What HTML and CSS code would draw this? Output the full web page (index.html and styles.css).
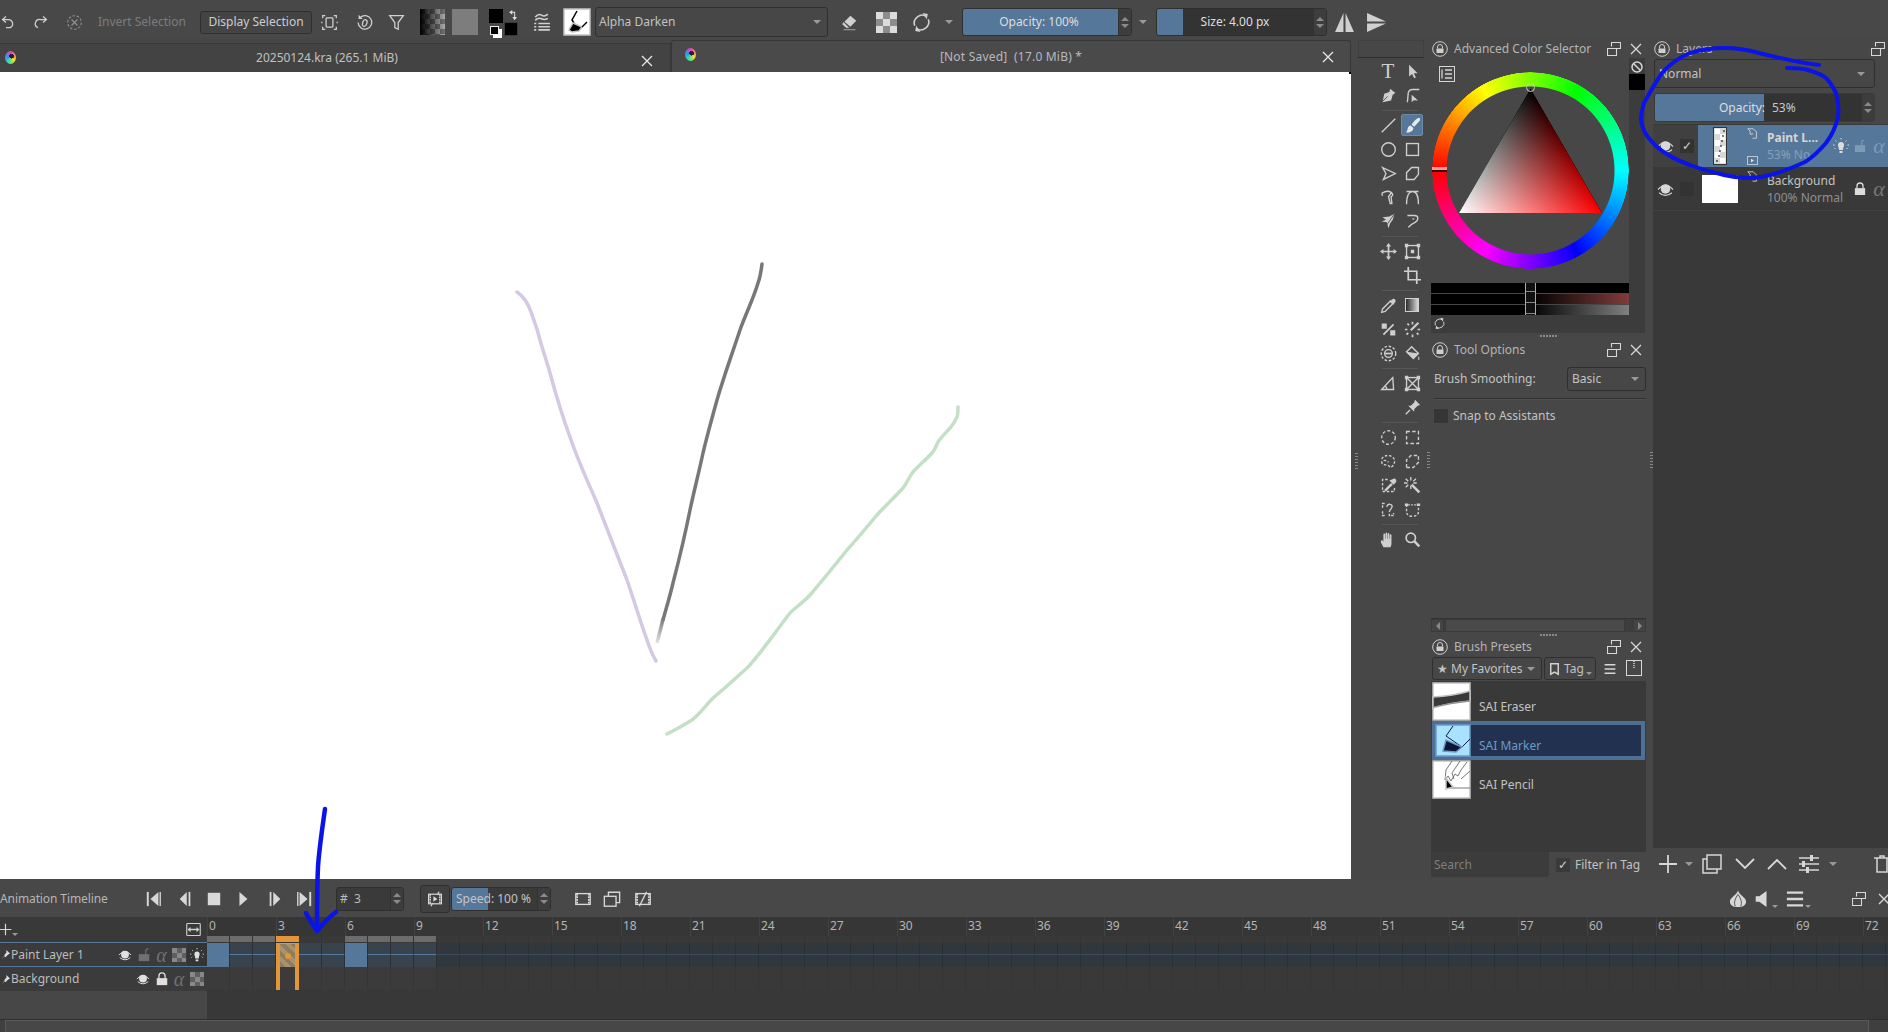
FILE: index.html
```html
<!DOCTYPE html>
<html lang="en">
<head>
<meta charset="utf-8">
<title>Krita</title>
<link rel="stylesheet" href="styles.css">
</head>
<body>
<svg class="defs" aria-hidden="true">
  <symbol id="undo" viewBox="0 0 20 20"><path d="M7 3 3 6.500 7 10M3.500 6.500H10a5 5 0 0 1 2 9.500H7"/></symbol>
  <symbol id="redo" viewBox="0 0 20 20"><path d="M13 3 17 6.500 13 10M16.500 6.500H10a5 5 0 0 0-3 9.500"/></symbol>
  <symbol id="desel" viewBox="0 0 20 20"><circle cx="10" cy="10" r="8" stroke-dasharray="3 2" stroke-width="1.300"/><path d="m6.500 6.500 7 7m0-7-7 7"/></symbol>
  <symbol id="fit" viewBox="0 0 20 20"><path d="M2 5V2h3M15 2h3v3M18 15v3h-3M5 18H2v-3M1 9v2M19 9v2"/><rect x="6" y="4.500" width="8" height="11" rx="1"/></symbol>
  <symbol id="hist" viewBox="0 0 20 20"><path d="M5 4a8 8 0 1 1-2.500 6"/><path d="M3 1v5h5z" fill="currentColor" stroke="none"/><ellipse cx="10.500" cy="10.500" rx="2.500" ry="4" transform="rotate(20 10 10)"/></symbol>
  <symbol id="funnel" viewBox="0 0 20 20"><path d="M2 2h16l-6 8v8l-4-2v-6z"/></symbol>
  <symbol id="mbr" viewBox="0 0 20 20"><path d="M4 5q3-4 6-2t6-1M4 8q3-3 6-1.500t6-.5M3 11h2M7 11h11M3 14h2M7 14h11M3 17h2M7 17h11"/></symbol>
  <symbol id="eraser" viewBox="0 0 20 20"><path d="m11 2 7 6-7 7-7-6z" fill="currentColor" stroke="none"/><path d="m3 10 6 6H6l-4-4zM3 18.500h14" fill="currentColor" stroke="currentColor" stroke-width=".8"/></symbol>
  <symbol id="reload" viewBox="0 0 20 20"><path d="M15 4.500A7.500 7.500 0 0 0 3.500 13M5 15.500A7.500 7.500 0 0 0 16.500 7"/><path d="m11 1 5 1-1 5zM9 19l-5-1 1-5z" fill="currentColor" stroke="none"/></symbol>
  <symbol id="mirh" viewBox="0 0 20 20"><path d="M9 1v18H1zM11 1v18h8z" fill="currentColor" stroke="none"/></symbol>
  <symbol id="mirv" viewBox="0 0 20 20"><path d="M1 1h0l18 8H1zM1 11h18L1 19z" fill="currentColor" stroke="none"/></symbol>
  <symbol id="lockc" viewBox="0 0 16 16"><circle cx="8" cy="8" r="7.300" stroke-width="1"/><rect x="4.500" y="7.500" width="7" height="4.500" fill="currentColor" stroke="none"/><path d="M5.500 7.500V6a2.500 2.500 0 0 1 5 0v1.500" stroke-width="1"/></symbol>
  <symbol id="float" viewBox="0 0 14 14"><path d="M4.500 4.500V.5h9v6h-4M.5 6.500h9v7h-9z" stroke-width="1.100"/></symbol>
  <symbol id="close" viewBox="0 0 12 12"><path d="m1 1 10 10M11 1 1 11" stroke-width="1.300"/></symbol>
  <symbol id="eye" viewBox="0 0 16 16"><path d="M1 8q7-8 14 0M2 11q6 5 12 0" stroke-width="1.100"/><circle cx="8" cy="7.500" r="4.500" fill="currentColor" stroke="none"/></symbol>
  <symbol id="lockopen" viewBox="0 0 14 16"><rect x="1" y="7" width="12" height="8" fill="currentColor" stroke="none"/><path d="M9 7V4a3 3 0 0 1 3-3" stroke-width="1.300"/></symbol>
  <symbol id="lockclosed" viewBox="0 0 14 16"><rect x="1" y="7" width="12" height="8" fill="currentColor" stroke="none"/><path d="M3.500 7V4.500a3.500 3.500 0 0 1 7 0V7" stroke-width="1.500"/></symbol>
  <symbol id="bulb" viewBox="0 0 16 16"><path d="M5 7a3 3 0 1 1 6 0c0 2-1 2-1 5H6c0-3-1-3-1-5zM6.500 13h3v2h-3z" fill="currentColor" stroke="none"/><path d="M8 0v1.500M2.500 2.500 3.500 3.500M13.500 2.500 12.500 3.500M0 7h1.500M14.500 7H16M1.500 11l1-1M14.500 11l-1-1" stroke-width="1"/></symbol>
  <symbol id="corner" viewBox="0 0 14 14"><path d="M1 1h7l4 4v8H7M1 1l3 3v4l4-.500" stroke-width="1"/></symbol>
  <symbol id="film" viewBox="0 0 14 12"><rect x=".5" y=".5" width="13" height="11" stroke-width="1"/><path d="M5 3.500v5l4-2.500z" fill="currentColor" stroke="none"/></symbol>
  <symbol id="list" viewBox="0 0 16 16"><rect x=".5" y=".5" width="15" height="15" stroke-width="1"/><path d="M3 3.500v9M6 4h7M6 8h7M6 12h7" stroke-width="1.300"/></symbol>
  <symbol id="nocolor" viewBox="0 0 12 12"><circle cx="6" cy="6" r="5"/><path d="m2.500 2.500 7 7"/></symbol>

  <symbol id="t-arrow" viewBox="0 0 20 20"><path d="M6 2v14l3.500-3 2.500 5 2-1-2.500-5H16z" fill="currentColor" stroke="none"/></symbol>
  <symbol id="t-pen" viewBox="0 0 20 20"><path d="m12 2 6 5-3 2-2 7-10 2 2-10 6-2z" fill="currentColor" stroke="none"/><path d="m3 17 6-6" stroke="#474747" stroke-width="1"/></symbol>
  <symbol id="t-path" viewBox="0 0 20 20"><path d="M4 18 5 7q1-4 5-4h8"/><path d="M9 9v9l2.500-2.500 5 .5z" fill="currentColor" stroke="none"/></symbol>
  <symbol id="t-line" viewBox="0 0 20 20"><path d="m2 18 16-16"/></symbol>
  <symbol id="t-brush" viewBox="0 0 20 20"><path d="M18 1c1.500 1 1 3 0 4l-6 6.500L9 9c2-3 6-8 9-8zM8 10l3 3c0 4-5 6-9 5 2-1 2-3 2.500-5S6.500 10 8 10z" fill="#e8e8e8" stroke="none"/></symbol>
  <symbol id="t-ell" viewBox="0 0 20 20"><circle cx="10" cy="10" r="8"/></symbol>
  <symbol id="t-rect" viewBox="0 0 20 20"><rect x="3" y="3" width="14" height="14"/></symbol>
  <symbol id="t-poly" viewBox="0 0 20 20"><path d="m3 3 15 7-14 7 3-7z"/></symbol>
  <symbol id="t-pline" viewBox="0 0 20 20"><path d="M3 17V9l6-6h8v8l-5 6z"/></symbol>
  <symbol id="t-bez" viewBox="0 0 20 20"><path d="M2 5q7-4 11-1t0 5l1 8h-2l-2-8 3-4M2 5l1 3"/></symbol>
  <symbol id="t-curve" viewBox="0 0 20 20"><path d="M3 18C3 6 7 3 10 3s7 3 7 15M3 3h14"/></symbol>
  <symbol id="t-dyn" viewBox="0 0 20 20"><path d="m17 1-6 3-8 1 4 3-5 2 6 1 2 7 2-6 3-4z" fill="currentColor" stroke="none"/><path d="m17 1-9 13" stroke="#474747" stroke-width="1"/></symbol>
  <symbol id="t-free" viewBox="0 0 20 20"><path d="M4 3h8c6 0 5 6 1 8-3 1.500-6 3-8 6"/><path d="M10 7h2"/></symbol>
  <symbol id="t-move" viewBox="0 0 20 20"><path d="M10 2v16M2 10h16" stroke-width="2"/><path d="m10 0 3 4H7zM10 20l3-4H7zM0 10l4-3v6zM20 10l-4-3v6z" fill="currentColor" stroke="none"/></symbol>
  <symbol id="t-trans" viewBox="0 0 20 20"><rect x="3" y="3" width="14" height="14"/><path d="M1 1h4v4H1zM15 1h4v4h-4zM1 15h4v4H1zM15 15h4v4h-4zM8 8h4v4H8z" fill="currentColor" stroke="none"/></symbol>
  <symbol id="t-crop" viewBox="0 0 20 20"><path d="M5 0v15h15M0 5h15v15" stroke-width="2"/></symbol>
  <symbol id="t-pick" viewBox="0 0 20 20"><path d="m12 5 3 3-9 9-4 1 1-4z"/><path d="M11 4l5 5 1-2 1-1c1-1 0-4-2-4-1 0-2 1-2 1l-1 1z" fill="currentColor" stroke="none"/></symbol>
  <symbol id="t-sim" viewBox="0 0 20 20"><path d="m4 16 12-12" stroke-width="2"/><path d="M2 3h6v6H2zM12 11h6v6h-6z" fill="currentColor" stroke="none"/></symbol>
  <symbol id="t-patch" viewBox="0 0 20 20"><path d="M17 2 8 11" stroke-width="2.500"/><path d="M10 1v3M4 3l2 2M1 10h3M3 16l2-2M10 19v-3M17 16l-2-2M19 10h-3" stroke-width="2"/></symbol>
  <symbol id="t-lazy" viewBox="0 0 20 20"><circle cx="10" cy="10" r="8.500" stroke-dasharray="3 2"/><circle cx="10" cy="10" r="4.500"/><path d="M6 10h8" stroke-width="2"/></symbol>
  <symbol id="t-fill" viewBox="0 0 20 20"><path d="m9 2 8 8-6 6-8-8z"/><path d="m3 8 14 2-6 6z" fill="currentColor" stroke="none"/><path d="M17 13q2 3 1 5-2 0-1-5" fill="currentColor" stroke="none"/></symbol>
  <symbol id="t-assist" viewBox="0 0 20 20"><path d="M2 17 15 3l1 14zM8 17q0-3-2-4"/></symbol>
  <symbol id="t-persp" viewBox="0 0 20 20"><rect x="3" y="3" width="14" height="14"/><path d="m3 3 14 14M17 3 3 17"/><path d="M1 1h4v4H1zM15 1h4v4h-4zM1 15h4v4H1zM15 15h4v4h-4z" fill="currentColor" stroke="none"/></symbol>
  <symbol id="t-pin" viewBox="0 0 20 20"><path d="m13 1 6 6-3 1-4 4 0 3-7-7h3l4-4z" fill="currentColor" stroke="none"/><path d="m7 13-5 5"/></symbol>
  <symbol id="s-ell" viewBox="0 0 20 20"><circle cx="10" cy="10" r="8" stroke-dasharray="3.500 2.500"/></symbol>
  <symbol id="s-rect" viewBox="0 0 20 20"><rect x="3" y="3" width="14" height="14" stroke-dasharray="4 2.670"/></symbol>
  <symbol id="s-lasso" viewBox="0 0 20 20"><path d="M2 7c3-6 13-5 15 1 1 5-3 9-5 9-3-5-9-1-10-6 1-3 6-3 8 0" stroke-dasharray="3 2"/></symbol>
  <symbol id="s-poly" viewBox="0 0 20 20"><path d="M3 17V8l5-5h9v8l-6 6z" stroke-dasharray="4 2.500"/></symbol>
  <symbol id="s-pick" viewBox="0 0 20 20"><path d="M9 3H3v14h14v-6" stroke-dasharray="3 2"/><path d="m5 15 8-8 2 2-8 8zM11 4l5 5 3-3c1-2-1-5-3-4z" fill="currentColor" stroke="none"/></symbol>
  <symbol id="s-wand" viewBox="0 0 20 20"><path d="m9 9 9 9" stroke-width="3"/><path d="M8 0v4M8 10v4M0 7h4M11 7h4M2 2l3 3M14 2l-3 3M2 12l3-3"/></symbol>
  <symbol id="s-magic" viewBox="0 0 20 20"><path d="M3 8V3h4M3 12v5h4M13 17h3v-3" stroke-dasharray="3 1.500"/><path d="M8 7q1-4 4-3 4 1 1 5-2 2-2 4M11 15v3"/></symbol>
  <symbol id="s-bez" viewBox="0 0 20 20"><path d="M3 4v9c0 3 3 5 7 5s7-2 7-5V4" stroke-dasharray="3 2"/><path d="M1 3h4v3H1zM15 3h4v3h-4z" fill="currentColor" stroke="none"/><path d="M5 4.500h10" stroke-dasharray="2 1.500"/></symbol>
  <symbol id="s-hand" viewBox="0 0 20 20"><path d="M4 19c-2-4-3-5-3-7 0-1.500 2-1.500 3 .5V4c0-1.500 2-1.500 2 0V9h.5V3c0-1.500 2-1.500 2 0v6h.5V3.500c0-1.500 2-1.500 2 0V9h.5V5c0-1.500 2-1.500 2 0v10c0 2-1 3-1 4z" fill="currentColor" stroke="none"/></symbol>
  <symbol id="s-zoom" viewBox="0 0 20 20"><circle cx="8" cy="8" r="5.500" stroke-width="2"/><path d="m12 12 6 6" stroke-width="3"/></symbol>

  <symbol id="b-first" viewBox="0 0 18 18"><path d="M2 1v16" stroke-width="2.200"/><path d="M14 1v16L5 9z" fill="currentColor" stroke="none"/><path d="M16 1v16" stroke-width="1.500"/></symbol>
  <symbol id="b-prev" viewBox="0 0 18 18"><path d="M11 1v16L3 9z" fill="currentColor" stroke="none"/><path d="M14 1v16" stroke-width="2"/></symbol>
  <symbol id="b-stop" viewBox="0 0 18 18"><rect x="2" y="2" width="14" height="14" fill="currentColor" stroke="none"/></symbol>
  <symbol id="b-play" viewBox="0 0 18 18"><path d="M5 1v16l9-8z" fill="currentColor" stroke="none"/></symbol>
  <symbol id="b-next" viewBox="0 0 18 18"><path d="M7 1v16l8-8z" fill="currentColor" stroke="none"/><path d="M4 1v16" stroke-width="2"/></symbol>
  <symbol id="b-last" viewBox="0 0 18 18"><path d="M4 1v16L13 9z" fill="currentColor" stroke="none"/><path d="M16 1v16" stroke-width="2.200"/><path d="M2 1v16" stroke-width="1.500"/></symbol>
  <symbol id="b-drop" viewBox="0 0 20 20"><rect x="2" y="4" width="16" height="12"/><path d="M4 4v12M16 4v12" stroke-width="2" stroke-dasharray="2 1"/><path d="m8 6.500 5 3.500-5 3.500z" fill="currentColor" stroke="none"/><path d="M15 1 13 5M7 15l-2 4"/></symbol>
  <symbol id="o-one" viewBox="0 0 20 20"><rect x="2" y="4" width="16" height="12"/><path d="M3.500 4v12M16.500 4v12" stroke-dasharray="2 1" stroke-width="2"/></symbol>
  <symbol id="o-two" viewBox="0 0 20 20"><rect x="1.500" y="7" width="13" height="11"/><path d="M6 7V2.500h12.500V14h-4"/></symbol>
  <symbol id="o-off" viewBox="0 0 20 20"><rect x="2" y="4" width="16" height="12"/><path d="m14 2-8 16"/><path d="M3.500 4v12M16.500 4v12" stroke-dasharray="2 1" stroke-width="2"/></symbol>
  <symbol id="onion" viewBox="0 0 20 20"><path d="M10 0c0 5-9 8-9 13 0 3 3 6 9 6s9-3 9-6c0-5-9-8-9-13z" fill="currentColor" stroke="none"/><path d="M7 18c-2-4 0-9 3-13M13 18c2-4 0-9-3-13" stroke="#474747" stroke-width="1"/></symbol>
  <symbol id="speaker" viewBox="0 0 20 20"><path d="M3 7h4l8-6v18l-8-6H3z" fill="currentColor" stroke="none"/></symbol>
  <symbol id="menu3" viewBox="0 0 20 20"><path d="M1 3h18M1 10h18M1 17h18" stroke-width="2.600"/></symbol>
  <symbol id="pin" viewBox="0 0 10 10"><path d="m6 0 4 4-2 1-2 2-1 1-1-1-3 3 3-4 0-1 2-2z" fill="currentColor" stroke="none"/></symbol>
  <symbol id="plus" viewBox="0 0 20 20"><path d="M10 1v18M1 10h18" stroke-width="1.800"/></symbol>
  <symbol id="dup" viewBox="0 0 20 20"><path d="M5 1h14v14H5zM5 5H1v14h14v-4" stroke-width="1.500"/></symbol>
  <symbol id="down" viewBox="0 0 20 12"><path d="m1 1 9 9 9-9" stroke-width="1.800"/></symbol>
  <symbol id="up" viewBox="0 0 20 12"><path d="m1 11 9-9 9 9" stroke-width="1.800"/></symbol>
  <symbol id="sliders" viewBox="0 0 20 20"><path d="M0 4h20M0 10h20M0 16h20" stroke-width="1.600"/><path d="M11 1h3v6h-3zM3 7h3v6H3zM7 13h3v6H7z" fill="currentColor" stroke="none"/></symbol>
  <symbol id="fitw" viewBox="0 0 20 20"><rect x="1" y="2" width="18" height="16" rx="1"/><path d="M4 10h12" stroke-width="2"/><path d="m2 10 4-3.500v7zM18 10l-4-3.500v7z" fill="currentColor" stroke="none"/></symbol>
  <symbol id="tag" viewBox="0 0 12 16"><path d="M1 1h10v14l-5-3-5 3z" stroke-width="2"/></symbol>
  <symbol id="view" viewBox="0 0 16 16"><rect x=".5" y=".5" width="15" height="15" stroke-width="1"/><path d="M8 1v7" stroke-dasharray="1 1"/></symbol>
  <symbol id="trash" viewBox="0 0 20 20"><path d="M2 4h16M5 4v14h10V4M8 4V2h4v2"/></symbol>
  <symbol id="swap" viewBox="0 0 14 14"><path d="M7 3h4v8" stroke-width="1.300"/><path d="M8 0v6L4 3zM8 9h6l-3 4z" fill="currentColor" stroke="none"/></symbol>
</svg>

<div class="app">
  <header class="toolbar">
    <svg class="i"><use href="#undo"/></svg>
    <svg class="i"><use href="#redo"/></svg>
    <svg class="i dim"><use href="#desel"/></svg>
    <span class="invert">Invert Selection</span>
    <span class="btn">Display Selection</span>
    <svg class="i"><use href="#fit"/></svg>
    <svg class="i"><use href="#hist"/></svg>
    <svg class="i"><use href="#funnel"/></svg>
    <span class="swatch grad end"></span>
    <span class="swatch pattern end"></span>
    <span class="fgbg end">
      <span class="fg"></span>
      <svg class="swapi"><use href="#swap"/></svg>
      <span class="bg"></span>
      <span class="mini"></span>
    </span>
    <svg class="i big"><use href="#mbr"/></svg>
    <svg class="preset" viewBox="0 0 26 26"><rect width="26" height="26" fill="#fff"/><path d="M13 2 8 11l2 3" fill="none" stroke="#000"/><path d="m9 14 9 4-3 4-7 1-3-2z" fill="#000"/><path d="m18 18 5-5" stroke="#000"/></svg>
    <span class="combo blend end">Alpha Darken<i class="caret"></i></span>
    <svg class="i"><use href="#eraser"/></svg>
    <span class="checker big-check"></span>
    <svg class="i big"><use href="#reload"/></svg>
    <i class="caret"></i>
    <span class="spin opacity end"><span class="spin-text">Opacity: 100%</span><span class="spinner"><i class="up-a"></i><i class="dn-a"></i></span></span>
    <i class="caret"></i>
    <span class="spin size end"><span class="spin-text">Size: 4.00 px</span><span class="spinner"><i class="up-a"></i><i class="dn-a"></i></span></span>
    <svg class="i big"><use href="#mirh"/></svg>
    <svg class="i big"><use href="#mirv"/></svg>
  </header>

  <main class="workspace">
    <section class="docs">
      <div class="tabs">
        <div class="tab tab-a">
          <span class="kicon"></span>
          <span class="tab-title">20250124.kra (265.1 MiB)</span>
          <svg class="x"><use href="#close"/></svg>
        </div>
        <div class="tab tab-b">
          <span class="kicon"></span>
          <span class="tab-title">[Not Saved]  (17.0 MiB) *</span>
          <svg class="x"><use href="#close"/></svg>
        </div>
      </div>
      <div class="canvas">
        <svg class="strokes" viewBox="0 72 1351 807">
          <defs>
            <linearGradient id="grayfade" gradientUnits="userSpaceOnUse" x1="0" y1="618" x2="0" y2="643"><stop offset="0" stop-color="#777"/><stop offset="1" stop-color="#e4e4e4"/></linearGradient>
          </defs>
          <path class="st-purple" d="M517 292C523 296 528 303 531 312S537 327 540 340C544 354 547 362 550 373C556 395 563 418 570 437C578 461 588 482 597 503C607 529 617 554 627 580C634 600 640 621 647 640C650 649 653 656 656 661"/>
          <path class="st-gray" d="M762 264C761 272 760 278 758 283C753 300 746 313 740 330C732 354 724 376 717 400C712 418 707 436 703 453C699 472 694 491 690 510C685 535 679 560 673 583C670 596 666 609 663 620"/>
          <path class="st-gray-end" d="M663 619C661 628 659 635 657 643"/>
          <path class="st-green" d="M958 407C958 411 958 414 957 417C955 421 953 425 950 428C946 433 941 437 938 442C936 446 935 450 932 453C926 460 919 465 913 472C909 477 907 483 903 488C895 497 885 506 877 515C867 527 857 539 847 550C835 565 823 580 810 595C804 602 796 607 790 613C776 631 762 652 747 668C736 678 724 689 713 698C706 705 700 714 692 720C684 725 675 730 667 734"/>
        </svg>
        <span class="corner-mark"></span>
      </div>
    </section>

    <aside class="toolbox">
      <span class="vgrip canvas-grip"></span>
      <div class="toolbox-top"></div>
      <div class="tools">
        <span class="t-glyph">T</span>
        <svg class="tool"><use href="#t-arrow"/></svg>
        <svg class="tool"><use href="#t-pen"/></svg>
        <svg class="tool"><use href="#t-path"/></svg>
        <hr class="tool-sep">
        <svg class="tool"><use href="#t-line"/></svg>
        <span class="tool-on"><svg class="tool"><use href="#t-brush"/></svg></span>
        <svg class="tool"><use href="#t-ell"/></svg>
        <svg class="tool"><use href="#t-rect"/></svg>
        <svg class="tool"><use href="#t-poly"/></svg>
        <svg class="tool"><use href="#t-pline"/></svg>
        <svg class="tool"><use href="#t-bez"/></svg>
        <svg class="tool"><use href="#t-curve"/></svg>
        <svg class="tool"><use href="#t-dyn"/></svg>
        <svg class="tool"><use href="#t-free"/></svg>
        <hr class="tool-sep">
        <svg class="tool"><use href="#t-move"/></svg>
        <svg class="tool"><use href="#t-trans"/></svg>
        <span></span>
        <svg class="tool"><use href="#t-crop"/></svg>
        <hr class="tool-sep">
        <svg class="tool"><use href="#t-pick"/></svg>
        <span class="tool-grad"></span>
        <svg class="tool"><use href="#t-sim"/></svg>
        <svg class="tool"><use href="#t-patch"/></svg>
        <svg class="tool"><use href="#t-lazy"/></svg>
        <svg class="tool"><use href="#t-fill"/></svg>
        <hr class="tool-sep">
        <svg class="tool"><use href="#t-assist"/></svg>
        <svg class="tool"><use href="#t-persp"/></svg>
        <span></span>
        <svg class="tool"><use href="#t-pin"/></svg>
        <hr class="tool-sep">
        <svg class="tool"><use href="#s-ell"/></svg>
        <svg class="tool"><use href="#s-rect"/></svg>
        <svg class="tool"><use href="#s-lasso"/></svg>
        <svg class="tool"><use href="#s-poly"/></svg>
        <svg class="tool"><use href="#s-pick"/></svg>
        <svg class="tool"><use href="#s-wand"/></svg>
        <svg class="tool"><use href="#s-magic"/></svg>
        <svg class="tool"><use href="#s-bez"/></svg>
        <hr class="tool-sep">
        <svg class="tool"><use href="#s-hand"/></svg>
        <svg class="tool"><use href="#s-zoom"/></svg>
      </div>
    </aside>

    <span class="vgrip"></span>

    <section class="dock">
      <div class="dock-head">
        <svg class="lock"><use href="#lockc"/></svg>
        <span class="dock-title">Advanced Color Selector</span>
        <svg class="float"><use href="#float"/></svg>
        <svg class="x"><use href="#close"/></svg>
      </div>
      <div class="color-body">
        <div class="color-main">
          <div class="wheel-area">
            <svg class="list-btn"><use href="#list"/></svg>
            <div class="wheel-wrap">
              <div class="wheel"></div>
              <span class="wheel-mark"></span>
              <svg class="tri" viewBox="0 0 143 124">
                <defs>
                  <linearGradient id="tr" gradientUnits="userSpaceOnUse" x1="143" y1="124" x2="35.700" y2="62.100"><stop offset="0" stop-color="#f00"/><stop offset="1" stop-color="#000"/></linearGradient>
                  <linearGradient id="tw" gradientUnits="userSpaceOnUse" x1="0" y1="124" x2="107.300" y2="62.100"><stop offset="0" stop-color="#fff"/><stop offset="1" stop-color="#000"/></linearGradient>
                </defs>
                <polygon class="tri-p" points="71.500,0 0,124 143,124" fill="url(#tr)"/>
                <polygon class="tri-p tri-add" points="71.500,0 0,124 143,124" fill="url(#tw)"/>
              </svg>
              <span class="tri-mark"></span>
            </div>
          </div>
          <div class="bars">
            <div class="bar bar-1"></div>
            <div class="bar bar-2"></div>
            <div class="bar bar-3"></div>
            <span class="bar-handle"></span>
          </div>
          <div class="color-foot"><svg class="refresh"><use href="#reload"/></svg></div>
        </div>
        <div class="color-side">
          <svg class="nocolor"><use href="#nocolor"/></svg>
          <span class="blackbox"></span>
        </div>
      </div>

      <div class="split"><span class="dots"></span></div>

      <div class="dock-head">
        <svg class="lock"><use href="#lockc"/></svg>
        <span class="dock-title">Tool Options</span>
        <svg class="float"><use href="#float"/></svg>
        <svg class="x"><use href="#close"/></svg>
      </div>
      <div class="tool-options">
        <div class="opt-row">
          <span>Brush Smoothing:</span>
          <span class="combo smooth">Basic<i class="caret"></i></span>
        </div>
        <hr class="opt-sep">
        <label class="snap"><span class="check"></span>Snap to Assistants</label>
        <div class="hscroll">
          <span class="hs-btn"><i class="lt-a"></i></span>
          <span class="hs-thumb"></span>
          <span class="hs-btn"><i class="rt-a"></i></span>
        </div>
      </div>

      <div class="split short"><span class="dots"></span></div>

      <div class="dock-head">
        <svg class="lock"><use href="#lockc"/></svg>
        <span class="dock-title">Brush Presets</span>
        <svg class="float"><use href="#float"/></svg>
        <svg class="x"><use href="#close"/></svg>
      </div>
      <div class="preset-tools">
        <span class="combo fav">★ My Favorites<i class="caret"></i></span>
        <span class="combo tagb"><svg class="tagi"><use href="#tag"/></svg>Tag<i class="caret small"></i></span>
        <svg class="menu-i"><use href="#menu3"/></svg>
        <svg class="view-i"><use href="#view"/></svg>
      </div>
      <div class="preset-list">
        <div class="preset-item">
          <svg class="thumb" viewBox="0 0 37 37"><rect width="37" height="37" fill="#fff"/><path d="M0 14Q20 13 37 8V18Q15 20 0 25z" fill="#393939"/><path d="M0 24q18-4 37-6" stroke="#8a8a8a" stroke-width="1"/></svg>
          <span>SAI Eraser</span>
        </div>
        <div class="preset-item selected">
          <svg class="thumb" viewBox="0 0 34 31"><rect width="34" height="31" fill="#a8e2ff"/><path d="M17 1 10 11l16 11 8-8" fill="none" stroke="#101a3a" stroke-width="1"/><path d="M10 15 7 26l13 1 6-5z" fill="#0c1538"/></svg>
          <span>SAI Marker</span>
        </div>
        <div class="preset-item">
          <svg class="thumb" viewBox="0 0 37 37"><rect width="37" height="37" fill="#fff"/><path d="M19 0 13 9l-1 10 3-4 3 5 4-7 3 2 3-6 6-8M27 0l-8 12 2 6M37 10 28 18M14 27h23" fill="none" stroke="#555" stroke-width=".8"/><path d="m13 17 7 9-7 2z" fill="#000"/></svg>
          <span>SAI Pencil</span>
        </div>
      </div>
      <div class="preset-foot">
        <span class="search">Search</span>
        <label class="filter"><span class="check checked">✓</span>Filter in Tag</label>
      </div>
    </section>

    <span class="vgrip"></span>

    <section class="layers">
      <div class="layers-head">
        <svg class="lock"><use href="#lockc"/></svg>
        <span class="dock-title">Layers</span>
        <svg class="float"><use href="#float"/></svg>
      </div>
      <span class="combo normal">Normal<i class="caret"></i></span>
      <div class="spin layer-op">
        <span class="op-fill">Opacity:</span><span class="op-val">53%</span>
        <span class="spinner"><i class="up-a"></i><i class="dn-a"></i></span>
      </div>
      <div class="layer-list">
        <div class="layer sel">
          <svg class="eye"><use href="#eye"/></svg>
          <span class="check checked lg">✓</span>
          <svg class="lthumb" viewBox="0 0 12 36">
            <rect width="12" height="36" fill="#fff"/>
            <path d="M0 6h6v6H0zM6 0h6v6H6zM6 12h6v6H6zM0 18h6v6H0zM6 24h6v6H6zM0 30h6v6H0z" fill="#d8d8d8" stroke="none"/>
            <path d="M10 2v2M9 7v2M8 12v2M7 17v2M6 22v2M5 27v2M3 32v2" stroke="#000"/>
          </svg>
          <span class="mini-icons"><svg class="cn"><use href="#corner"/></svg><svg class="fm"><use href="#film"/></svg></span>
          <span class="lname"><b>Paint L...</b><small>53% No</small></span>
          <svg class="bulb"><use href="#bulb"/></svg>
          <svg class="lk dimblue"><use href="#lockopen"/></svg>
          <span class="alpha dimblue">α</span>
        </div>
        <div class="layer">
          <svg class="eye"><use href="#eye"/></svg>
          <span class="check lg"></span>
          <span class="lwhite"></span>
          <span class="mini-icons"><svg class="cn"><use href="#corner"/></svg></span>
          <span class="lname"><span>Background</span><small>100% Normal</small></span>
          <span></span>
          <svg class="lk"><use href="#lockclosed"/></svg>
          <span class="alpha">α</span>
        </div>
      </div>
      <div class="layer-btns">
        <svg class="lb"><use href="#plus"/></svg>
        <i class="caret"></i>
        <svg class="lb"><use href="#dup"/></svg>
        <svg class="lb"><use href="#down"/></svg>
        <svg class="lb"><use href="#up"/></svg>
        <svg class="lb"><use href="#sliders"/></svg>
        <i class="caret"></i>
        <span></span>
        <svg class="lb"><use href="#trash"/></svg>
      </div>
    </section>
  </main>

  <footer class="timeline">
    <div class="tl-head">
      <span class="tl-title">Animation Timeline</span>
      <svg class="pb"><use href="#b-first"/></svg>
      <svg class="pb"><use href="#b-prev"/></svg>
      <svg class="pb"><use href="#b-stop"/></svg>
      <svg class="pb"><use href="#b-play"/></svg>
      <svg class="pb"><use href="#b-next"/></svg>
      <svg class="pb"><use href="#b-last"/></svg>
      <span class="spin frame end"><span class="frame-text">#  3</span><span class="spinner"><i class="up-a"></i><i class="dn-a"></i></span></span>
      <span class="drop end"><svg class="pb"><use href="#b-drop"/></svg></span>
      <span class="spin speed end"><span class="speed-text">Speed: 100 %</span><span class="spinner"><i class="up-a"></i><i class="dn-a"></i></span></span>
      <span></span>
      <svg class="ob"><use href="#o-one"/></svg>
      <svg class="ob"><use href="#o-two"/></svg>
      <svg class="ob"><use href="#o-off"/></svg>
      <span></span>
      <svg class="ob"><use href="#onion"/></svg>
      <span class="with-caret"><svg class="ob"><use href="#speaker"/></svg><i class="caret small"></i></span>
      <span class="with-caret"><svg class="ob"><use href="#menu3"/></svg><i class="caret small"></i></span>
      <span></span>
      <svg class="float"><use href="#float"/></svg>
      <svg class="x x-clip"><use href="#close"/></svg>
    </div>
    <div class="tl-body">
      <div class="tl-left">
        <div class="tl-left-head">
          <span class="tl-add"><svg class="tl-plus"><use href="#plus"/></svg><i class="caret small"></i></span>
          <svg class="tl-fit"><use href="#fitw"/></svg>
        </div>
        <div class="tl-layer sel">
          <svg class="tl-pin"><use href="#pin"/></svg>
          <span class="tl-name">Paint Layer 1</span>
          <svg class="tl-ic"><use href="#eye"/></svg>
          <svg class="tl-ic dimmer"><use href="#lockopen"/></svg>
          <span class="alpha dimmer">α</span>
          <span class="checker small-check"></span>
          <span class="bulb-box"><svg class="tl-ic"><use href="#bulb"/></svg></span>
        </div>
        <div class="tl-layer bg-row">
          <svg class="tl-pin"><use href="#pin"/></svg>
          <span class="tl-name">Background</span>
          <svg class="tl-ic"><use href="#eye"/></svg>
          <svg class="tl-ic"><use href="#lockclosed"/></svg>
          <span class="alpha dimmer">α</span>
          <span class="checker small-check"></span>
        </div>
      </div>
      <div class="tl-right">
        <div class="ruler">
          <span>0</span><span>3</span><span>6</span><span>9</span><span>12</span><span>15</span><span>18</span><span>21</span><span>24</span><span>27</span><span>30</span><span>33</span><span>36</span><span>39</span><span>42</span><span>45</span><span>48</span><span>51</span><span>54</span><span>57</span><span>60</span><span>63</span><span>66</span><span>69</span><span>72</span>
        </div>
        <div class="strip">
          <i></i><i></i><i></i><i class="cur"></i><i class="off"></i><i class="off"></i><i></i><i></i><i></i><i></i>
        </div>
        <div class="track t1">
          <i class="key"></i><i></i><i></i>
          <i class="curkey"><b></b></i>
          <i></i><i></i>
          <i class="key"></i><i></i><i></i><i></i>
        </div>
        <div class="track t2">
          <i></i><i></i><i></i><i class="cursor"></i><i></i><i></i><i></i><i></i><i></i><i></i>
        </div>
      </div>
    </div>
    <div class="tl-scroll"><span class="tl-thumb"></span></div>
  </footer>
</div>

<svg class="annot" viewBox="0 0 1888 1032">
  <path d="M1819 65C1800 63 1775 57 1759 53C1745 49 1735 48 1724 48C1710 48 1700 50 1690 53C1680 57 1670 64 1662 73C1655 83 1649 94 1644 103C1642 110 1641 115 1641 120C1642 127 1644 132 1648 137C1654 145 1659 149 1665 153C1673 158 1681 162 1690 165C1700 169 1712 172 1724 175C1732 177 1741 178 1749 178C1759 178 1768 176 1777 173C1787 170 1796 166 1805 162C1813 157 1820 150 1826 143C1832 135 1836 126 1838 117C1839 108 1838 100 1836 93C1833 87 1830 82 1826 78C1821 74 1815 72 1808 70C1801 68 1795 68 1787 68"/>
  <path class="arrow" d="M325 809C322 830 319 850 318 867C317 888 317 908 317 928M306 913C309 919 313 925 317 931C322 925 329 917 336 912"/>
</svg>
</body>
</html>
```

FILE: styles.css
```css
* { box-sizing: border-box; }
html, body { margin: 0; padding: 0; }
body {
  width: 1888px; height: 1032px; overflow: hidden; position: relative;
  background: #474747; color: #c2c2c2;
  font: 12px/1 "Noto Sans", sans-serif;
}
i { font-style: normal; display: block; }
hr { margin: 0; border: 0; }
svg { display: block; fill: none; stroke: currentColor; stroke-width: 1.5; overflow: visible; }
.defs { display: none; }

.app { display: grid; grid-template-rows: 38px 841px 153px; height: 1032px; }

/* toolbar */
.toolbar {
  display: grid; align-items: center; justify-items: center;
  grid-template-columns: 16px 48px 20px 116px 112px 34px 36px 28px 35px 33px 40px 46px 26px 238px 42px 32px 38px 18px 174px 22px 173px 34px 30px;
  height: 38px; padding-top: 6px; background: #484848;
}
.end { justify-self: end; }
.i { width: 17px; height: 17px; color: #d0d0d0; }
.i.big { width: 21px; height: 21px; }
.dim { color: #8e8e8e; }
.invert { justify-self: start; padding-left: 14px; color: #7d7d7d; white-space: nowrap; }
.btn {
  width: 112px; height: 23px; display: flex; align-items: center; justify-content: center;
  border: 1px solid #2f2f2f; border-radius: 3px; background: #444; color: #cdcdcd; white-space: nowrap;
}
.swatch { width: 25px; height: 26px; }
.grad { background: linear-gradient(90deg, #000, transparent), repeating-conic-gradient(#aaa 0 25%, #707070 0 50%) 0 0/10px 10px; }
.pattern { width: 26px; background: #7d7d7d; }
.fgbg { position: relative; width: 29px; height: 27px; }
.fg { position: absolute; left: 0; top: 0; width: 14px; height: 14px; background: #000; }
.bg { position: absolute; right: 0; bottom: 0; width: 14px; height: 14px; background: #000; border: 1px solid #3a3a3a; }
.mini { position: absolute; left: 1px; bottom: 1px; width: 9px; height: 9px; background: #000; border: 1px solid #eee; box-shadow: 3px 3px 0 #fff; }
.swapi { position: absolute; right: 1px; top: 1px; width: 11px; height: 11px; color: #e0e0e0; }
.preset { width: 26px; height: 26px; }
.combo {
  position: relative; display: flex; align-items: center; padding-left: 4px;
  height: 24px; border: 1px solid #2f2f2f; border-radius: 3px; background: #474747; color: #c2c2c2; white-space: nowrap;
}
.blend { width: 233px; height: 30px; padding-left: 3px; }
.caret { width: 0; height: 0; border: 4px solid transparent; border-top: 4px solid #999; border-bottom: 0; }
.combo .caret { position: absolute; right: 6px; top: 50%; margin-top: -2px; }
.caret.small { border-width: 3px; border-bottom: 0; border-top-color: #999; }
.checker { display: block; background: repeating-conic-gradient(#8c8c8c 0 25%, #dcdcdc 0 50%) 0 0/14px 14px; }
.big-check { width: 21px; height: 21px; }
.spin { position: relative; display: flex; height: 28px; border: 1px solid #2f2f2f; border-radius: 3px; background: #333; color: #dedede; }
.spinner { position: absolute; right: 0; top: 0; bottom: 0; width: 13px; display: flex; flex-direction: column; align-items: center; justify-content: center; gap: 3px; background: #3d3d3d; border-left: 1px solid #333; }
.up-a { border: 4px solid transparent; border-bottom: 4px solid #8a8a8a; border-top: 0; }
.dn-a { border: 4px solid transparent; border-top: 4px solid #8a8a8a; border-bottom: 0; }
.spin-text { flex: 1; display: flex; align-items: center; justify-content: center; white-space: nowrap; padding-right: 13px; }
.opacity { width: 170px; background: linear-gradient(90deg, #55779a 155px, #333 155px); }
.opacity .spin-text { padding-right: 16px; }
.size { width: 171px; background: linear-gradient(90deg, #55779a 26px, #333 26px); }

/* workspace */
.workspace { display: flex; height: 841px; min-width: 0; }
.docs { width: 1351px; flex: none; display: flex; flex-direction: column; }
.tabs { display: flex; height: 34px; flex: none; align-items: flex-end; }
.tab { position: relative; display: flex; align-items: center; justify-content: center; color: #c0c0c0; white-space: nowrap; }
.tab-a { width: 671px; height: 29px; background: #434343; border-top: 1px solid #383838; border-right: 1px solid #383838; padding-right: 16px; }
.tab-b { width: 680px; height: 32px; background: #4a4a4a; border: 1px solid #383838; border-bottom: 0; border-radius: 3px 3px 0 0; color: #b8b8c0; }
.tab-title { white-space: pre; }
.tab-b .tab-title { letter-spacing: .2px; }
.tab .x { position: absolute; top: 11px; width: 12px; height: 12px; color: #e8e8e8; }
.tab-a .x { right: 17px; }
.tab-b .x { right: 16px; top: 10px; }
.kicon {
  position: absolute; left: 5px; top: 7px; width: 11px; height: 13px; border-radius: 50%;
  background: radial-gradient(circle at 60% 40%, #2a1a3a 0 22%, transparent 24%), conic-gradient(#e040c0, #f0e020 35%, #40e0a0 55%, #20a0f0 75%, #e040c0);
}
.tab-b .kicon { left: 13px; top: 7px; }
.canvas { position: relative; flex: 1; background: #fff; }
.strokes { display: block; width: 1351px; height: 807px; }
.strokes path { fill: none; stroke-width: 3.500; stroke-linecap: round; stroke-linejoin: round; }
.st-purple { stroke: #d5c8e3; }
.st-gray { stroke: #777; }
.strokes .st-gray-end { stroke: url(#grayfade); stroke-linecap: butt; }
.st-green { stroke: #c3dfc6; }
.corner-mark { position: absolute; right: 0; top: 0; width: 2px; height: 2px; background: #000; }

/* toolbox */
.toolbox { position: relative; width: 76px; flex: none; color: #cfcfcf; }
.toolbox-top { width: 66px; height: 18px; margin: 2px 0 1px 7px; background: #474747; border-bottom: 1px solid #2e2e2e; box-shadow: inset 0 1px #404040, inset 1px 0 #404040, inset -1px 0 #404040; }
.tools { display: grid; grid-template-columns: 24px 24px; grid-auto-rows: auto; margin-left: 25px; }
.tools > * { justify-self: center; align-self: center; }
.tool { width: 17px; height: 17px; margin: 3.500px 0; color: #cfcfcf; stroke-width: 1.600; }
.tool-sep { grid-column: 1 / 3; width: 36px; height: 1px; margin: 2.500px 0; background: #575757; }
.tool-on { width: 22px; height: 22px; display: flex; align-items: center; justify-content: center; background: #55779a; border: 1px solid #6d8aa8; border-radius: 2px; margin: 1px 0; }
.tool-on .tool { margin: 0; }
.t-glyph { font: 21px/24px "Liberation Serif", serif; color: #cfcfcf; height: 24px; }
.tool-grad { width: 14px; height: 14px; background: linear-gradient(90deg, #2c2c2c, #d8d8d8); border: 1px solid #d0d0d0; }

.vgrip { width: 3px; height: 18px; flex: none; align-self: center; margin-top: 5px; background: repeating-linear-gradient(#888 0 1px, transparent 1px 3px); }
.canvas-grip { position: absolute; left: 4px; top: 415px; margin: 0; }

/* docks */
.dock { width: 220px; flex: none; padding: 0 4px 0 1px; display: flex; flex-direction: column; }
.dock-head { display: flex; align-items: center; height: 20px; flex: none; padding: 2px 0 0 1px; }
.lock { width: 16px; height: 16px; color: #cfcfcf; flex: none; }
.dock-title { margin-left: 6px; flex: 1; color: #b5b5b5; white-space: nowrap; }
.float { width: 14px; height: 14px; color: #d8d8d8; flex: none; margin-right: 9px; }
.dock-head .x { width: 12px; height: 12px; color: #d8d8d8; flex: none; margin-right: 4px; }
.color-body { display: flex; height: 275px; flex: none; }
.color-main { width: 198px; display: flex; flex-direction: column; }
.wheel-area { position: relative; height: 225px; }
.list-btn { position: absolute; left: 8px; top: 8px; width: 16px; height: 16px; color: #d4d4d4; }
.wheel-wrap { position: absolute; left: .5px; top: 13.500px; width: 197px; height: 197px; }
.wheel {
  width: 197px; height: 197px; border-radius: 50%;
  background: conic-gradient(from 270deg, #f00, #ff0, #0f0, #0ff, #00f, #f0f, #f00);
  -webkit-mask: radial-gradient(circle closest-side, transparent 83.500px, #000 84.500px, #000 98px, transparent 98.500px);
  mask: radial-gradient(circle closest-side, transparent 83.500px, #000 84.500px, #000 98px, transparent 98.500px);
}
.wheel-mark { position: absolute; left: 0; top: 95px; width: 15px; height: 5px; background: linear-gradient(#ff9a9a 0 50%, #400 50%); }
.tri { position: absolute; left: 27.500px; top: 17px; width: 143px; height: 124px; isolation: isolate; }
.tri-p { stroke: none; }
.tri-add { mix-blend-mode: plus-lighter; }
.tri-mark { position: absolute; left: 94px; top: 11px; width: 9px; height: 9px; border: 1px solid #c8c8c8; border-radius: 50%; }
.bars { position: relative; height: 32px; display: flex; flex-direction: column; gap: 1px; }
.bar { height: 10px; background: #000; }
.bar-2 { background: linear-gradient(90deg, #000 50%, #803c3c); }
.bar-3 { background: linear-gradient(90deg, #000 50%, #808080); }
.bar-handle { position: absolute; left: 94px; top: 0; width: 11px; height: 32px; border-left: 1px solid #aaa; border-right: 1px solid #aaa; background: repeating-linear-gradient(#111 0 8px, #888 8px 9px, #111 9px 11px); }
.color-foot { height: 18px; background: #3c3c3c; padding: 2px 0 0 2px; }
.refresh { width: 13px; height: 13px; color: #d0d0d0; }
.color-side { width: 16px; background: #3c3c3c; display: flex; flex-direction: column; align-items: center; padding-top: 3px; }
.nocolor { width: 12px; height: 12px; color: #d8d8d8; }
.blackbox { width: 16px; height: 16px; margin-top: 1px; background: #000; }
.split { height: 6px; flex: none; display: flex; align-items: center; justify-content: center; padding-left: 20px; }
.split.short { height: 4px; align-items: flex-end; }
.dots { width: 17px; height: 2px; background: repeating-linear-gradient(90deg, #8a8a8a 0 2px, transparent 2px 3px); }

.tool-options { height: 273px; flex: none; display: flex; flex-direction: column; }
.opt-row { display: flex; align-items: center; justify-content: space-between; height: 24px; margin: 8px 0 0 3px; }
.smooth { width: 79px; padding-left: 4px; }
.opt-sep { height: 1px; margin: 7px 0 0 3px; background: #2f2f2f; box-shadow: 0 1px #505050; }
.snap { display: flex; align-items: center; gap: 5px; height: 14px; margin: 10px 0 0 3px; }
.check { display: flex; align-items: center; justify-content: center; width: 14px; height: 14px; background: #363636; color: #cfcfcf; font-size: 12px; flex: none; }
.hscroll { display: flex; height: 14px; margin-top: auto; border-top: 1px solid #333; gap: 1px; background: #3d3d3d; }
.hs-btn { width: 13px; display: flex; align-items: center; justify-content: center; background: #444; border: 1px solid #3a3a3a; }
.hs-thumb { flex: 1; margin-right: 7px; background: #4a4a4a; border: 1px solid #3a3a3a; }
.lt-a { border: 4px solid transparent; border-right: 4px solid #888; border-left: 0; }
.rt-a { border: 4px solid transparent; border-left: 4px solid #888; border-right: 0; }

.preset-tools { display: flex; align-items: center; height: 25px; flex: none; padding-left: 1px; gap: 2px; }
.fav { width: 110px; height: 23px; padding-left: 4px; }
.tagb { width: 52px; height: 23px; gap: 5px; padding-left: 5px; }
.tagb .caret { right: 3px; top: auto; bottom: 4px; }
.tagi { width: 9px; height: 14px; color: #d0d0d0; }
.menu-i { width: 12px; height: 12px; margin-left: 6px; color: #d8d8d8; }
.view-i { width: 16px; height: 16px; margin-left: 8px; margin-top: -2px; color: #d8d8d8; }
.preset-list { height: 171px; flex: none; background: #393939; padding: 2px 1px; display: flex; flex-direction: column; }
.preset-item { display: flex; align-items: flex-end; gap: 9px; height: 37px; padding-left: 1px; margin-bottom: 1px; }
.preset-item span { padding-bottom: 7px; }
.thumb { width: 37px; height: 37px; flex: none; }
.preset-item.selected { height: 39px; margin-bottom: 1px; padding: 0; background: #233150; border: 4px solid #4e7094; color: #6b9bc9; gap: 9px; }
.selected .thumb { width: 34px; height: 31px; }
.selected span { padding-bottom: 4px; }
.preset-foot { display: flex; align-items: center; height: 25px; flex: none; }
.search { width: 118px; height: 25px; display: flex; align-items: center; padding-left: 3px; background: #3c3c3c; border-radius: 0 0 3px 3px; color: #7e7e7e; }
.filter { display: flex; align-items: center; gap: 5px; margin-left: 7px; white-space: nowrap; }

/* layers */
.layers { width: 235px; flex: none; display: flex; flex-direction: column; position: relative; }
.layers-head { display: flex; align-items: center; height: 20px; flex: none; padding: 2px 0 0 1px; }
.layers-head .lock { margin-left: 0; }
.layers-head .float { margin-right: 3px; }
.normal { width: 221px; height: 29px; margin: 1px 0 0 1px; flex: none; }
.normal .caret { right: 9px; }
.layer-op { width: 221px; height: 29px; margin: 5px 0 0 1px; flex: none; align-items: center; border-color: #3a3a3a; background: linear-gradient(90deg, #55779a 109px, #333 109px); }
.op-fill { width: 110px; text-align: right; }
.op-val { margin-left: 7px; color: #c8c8c8; }
.layer-list { flex: 1; margin-top: 2px; background: #393939; }
.layer {
  display: grid; align-items: center; justify-items: center;
  grid-template-columns: 24px 21px 44px 20px 70px 18px 20px 18px;
  height: 42px; margin-top: 1px;
}
.layer + .layer { height: 43px; margin-top: 1px; border-bottom: 1px solid #414141; }
.layer.sel { background: linear-gradient(90deg, #404040 45px, #55779a 45px); }
.eye { width: 17px; height: 17px; color: #d8d8d8; }
.check.lg { justify-self: start; margin-left: 3px; background: #333; }
.check.checked { background: #3a3a3a; }
.check.checked.lg { background: #333; }
.lthumb { width: 12px; height: 36px; outline: 1px solid #333; stroke-width: 1; }
.lwhite { width: 36px; height: 28px; background: #fff; }
.mini-icons { display: flex; flex-direction: column; justify-content: space-between; height: 100%; padding: 3px 0 2px; align-self: stretch; color: #e0e0e0; }
.cn { width: 11px; height: 11px; stroke-width: 1; }
.fm { width: 11px; height: 9px; stroke-width: 1; }
.lname { justify-self: start; padding-left: 5px; display: flex; flex-direction: column; gap: 5px; white-space: nowrap; line-height: 12px; }
.lname b { color: #d4d4d4; }
.lname small { font-size: 12px; color: #8f8f8f; }
.sel .lname small { color: #85a0bb; }
.bulb { width: 16px; height: 16px; color: #dcdcdc; }
.lk { width: 12px; height: 14px; color: #dcdcdc; }
.alpha { font: italic 22px/18px "Liberation Serif", serif; color: #777; }
.dimblue { color: #7d9ab6; }
.layer-btns {
  display: grid; align-items: center; justify-items: center; height: 31px; flex: none;
  grid-template-columns: 30px 12px 34px 32px 32px 32px 16px 35px 12px;
}
.lb { width: 20px; height: 20px; color: #d6d6d6; }

/* timeline */
.timeline { display: grid; grid-template-rows: 38px 102px 13px; height: 153px; background: #484848; overflow: hidden; }
.tl-head {
  display: grid; align-items: center; justify-items: center; padding-top: 1px;
  grid-template-columns: 140px 28px 34px 24px 34px 30px 28px 86px 46px 101px 14px 36px 22px 40px 1fr 36px 18px 48px 23px 28px 15px;
}
.tl-title { justify-self: start; color: #b5b5b5; white-space: nowrap; margin-top: 1px; letter-spacing: -.1px; }
.pb { width: 16px; height: 16px; color: #d8d8d8; }
.ob { width: 18px; height: 18px; color: #d8d8d8; }
.frame { width: 68px; height: 24px; background: #3a3a3a; align-items: center; }
.frame-text { padding-left: 3px; color: #bbb; white-space: pre; }
.drop { width: 30px; height: 28px; border: 1px solid #2f2f2f; border-radius: 3px; display: flex; align-items: center; justify-content: center; background: #404040; }
.speed { width: 100px; height: 24px; background: linear-gradient(90deg, #55779a 36px, #3a3a3a 36px); align-items: center; }
.speed-text { padding-left: 4px; white-space: nowrap; color: #c4c4c4; }
.with-caret { display: flex; align-items: flex-end; gap: 1px; }
.x-clip { justify-self: start; margin-left: 5px; width: 12px; height: 12px; color: #d8d8d8; }
.tl-head .float { margin: 0; }
.tl-body { display: grid; grid-template-columns: 207px 1fr; }
.tl-left { background: #474747; }
.tl-left-head { height: 25px; background: #393939; display: flex; align-items: center; justify-content: space-between; padding: 0 6px 0 0; }
.tl-add { display: flex; align-items: flex-end; margin-left: -1px; }
.tl-plus { width: 13px; height: 13px; color: #d8d8d8; }
.tl-fit { width: 15px; height: 15px; color: #d0d0d0; }
.tl-layer { display: grid; align-items: center; justify-items: center; height: 24px; background: #3b3b3b; }
.tl-layer.sel { grid-template-columns: 11px 104px 20px 18px 17px 17px 20px; height: 25px; border-top: 1px solid #55779a; border-bottom: 1px solid #55779a; }
.tl-layer.bg-row { grid-template-columns: 11px 122px 20px 18px 16px 20px; }
.tl-pin { width: 9px; height: 9px; color: #ddd; }
.tl-name { justify-self: start; color: #bcbcbc; }
.tl-ic { width: 14px; height: 14px; color: #e0e0e0; }
.dimmer { color: #707070; }
.tl-layer .alpha { color: #707070; font-size: 20px; }
.small-check { width: 14px; height: 14px; background: repeating-conic-gradient(#5f5f5f 0 25%, #888 0 50%) 0 0/10px 10px; }
.bulb-box { width: 20px; height: 23px; display: flex; align-items: center; justify-content: center; background: #343434; }

.tl-right { background: #383838; min-width: 0; }
.ruler { display: flex; height: 19px; background: #363636; }
.ruler span { flex: none; width: 69px; padding: 3px 0 0 1px; border-left: 1px solid #424242; color: #b4b4b4; }
.strip {
  display: flex; height: 6px;
  background: repeating-linear-gradient(90deg, #393939 0 22px, #343434 22px 23px);
}
.strip i { width: 22px; margin-right: 1px; background: #6c6c6c; }
.strip i.off { background: none; }
.strip i.cur { width: 23px; margin-right: 0; background: #e3953a; }
.track { display: flex; height: 24px; }
.track i { position: relative; width: 22px; margin-right: 1px; flex: none; }
.t1 {
  height: 24px; margin-top: 1px;
  background: linear-gradient(#3a4a5a, #3a4a5a) 0 11px/100% 1px no-repeat, repeating-linear-gradient(90deg, #30373d 0 22px, #2a2f33 22px 23px);
}
.t1 i { background: linear-gradient(#57799b, #57799b) 0 11px/100% 1px no-repeat, #38434d; }
.t1 i.key { background: #55779a; }
.t1 i.curkey {
  width: 23px; margin-right: 0; display: flex; align-items: center; justify-content: center;
  border: solid #e3953a; border-width: 1px 4px 0;
  background: repeating-linear-gradient(45deg, #8c7c62 0 4px, #a8926c 4px 8px);
}
.curkey b { width: 6px; height: 6px; border-radius: 50%; background: #e3953a; }
.t2 { height: 23px; margin-top: 0; background: repeating-linear-gradient(90deg, #393939 0 22px, #353535 22px 23px); }
.t2 i { background: #3b3b3b; }
.t2 i.cursor { width: 23px; margin-right: 0; background: #3b3b3b; border: solid #e3953a; border-width: 0 4px; }
.tl-scroll { background: #3f3f3f; border-top: 1px solid #2f2f2f; padding-left: 5px; }
.tl-thumb { display: block; width: 1864px; height: 12px; background: #474747; border-left: 1px solid #5a5a5a; border-right: 1px solid #5a5a5a; border-top: 1px solid #5a5a5a; }

/* hand-drawn annotations on top of the screenshot */
.annot { position: absolute; left: 0; top: 0; width: 1888px; height: 1032px; pointer-events: none; stroke: #0a14e6; stroke-width: 4; stroke-linecap: round; stroke-linejoin: round; }
.arrow { stroke-width: 4.500; }
```
